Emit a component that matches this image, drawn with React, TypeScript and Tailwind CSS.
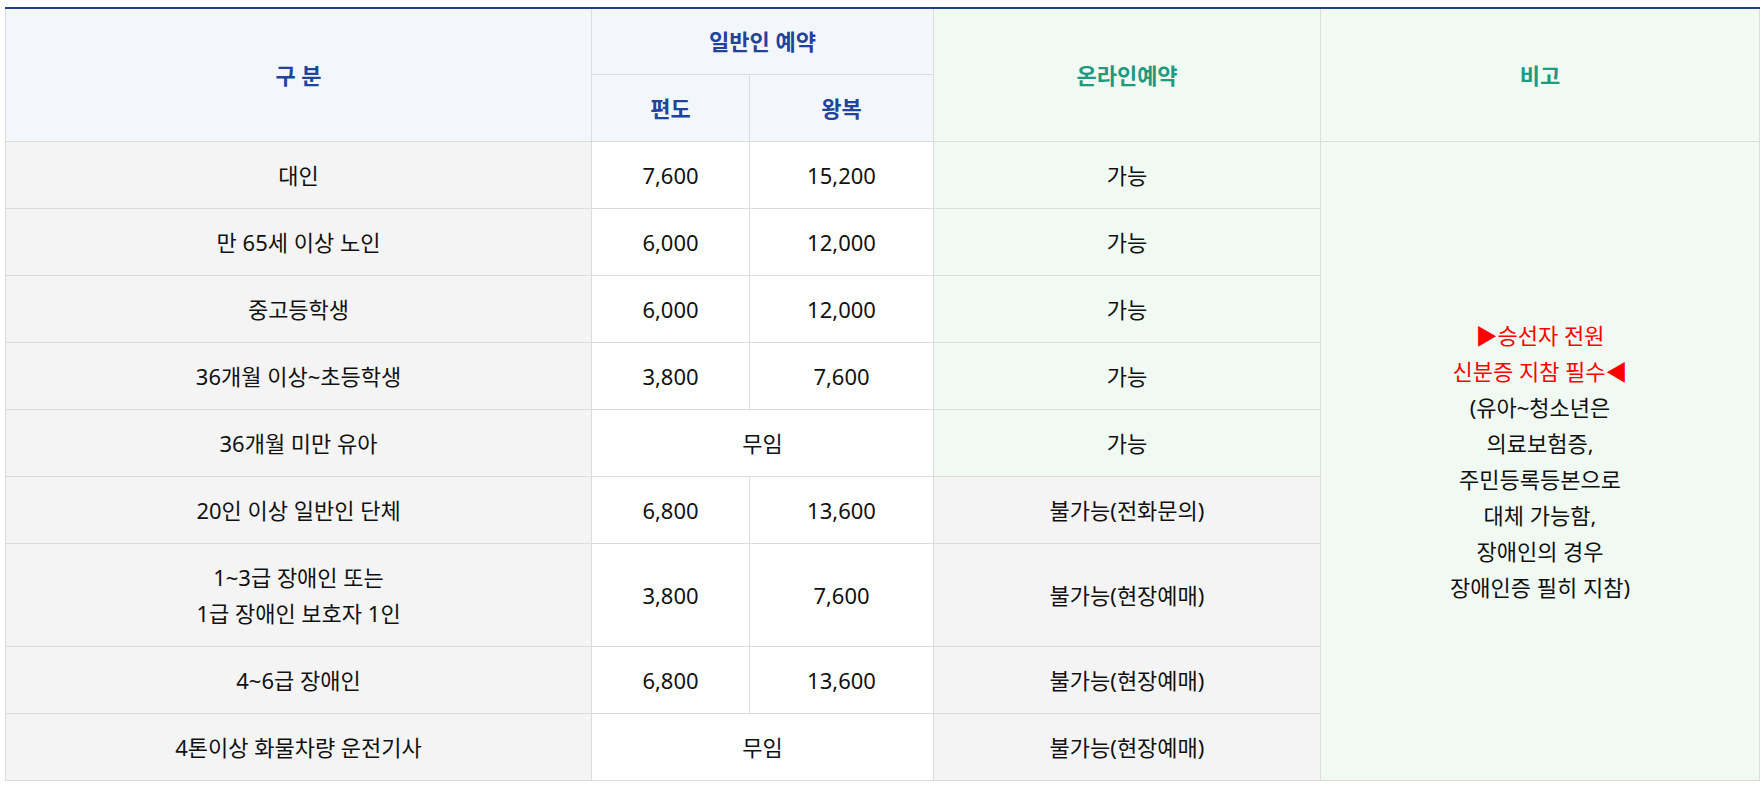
const font = "font-['Noto_Sans','Noto_Sans_CJK_KR',sans-serif]";

type Row = {
  label: string[];
  oneWay?: string;
  round?: string;
  free?: boolean;
  online: string;
  ok: boolean;
  tall?: boolean;
};

const rows: Row[] = [
  { label: ["대인"], oneWay: "7,600", round: "15,200", online: "가능", ok: true },
  { label: ["만 65세 이상 노인"], oneWay: "6,000", round: "12,000", online: "가능", ok: true },
  { label: ["중고등학생"], oneWay: "6,000", round: "12,000", online: "가능", ok: true },
  { label: ["36개월 이상~초등학생"], oneWay: "3,800", round: "7,600", online: "가능", ok: true },
  { label: ["36개월 미만 유아"], free: true, online: "가능", ok: true },
  { label: ["20인 이상 일반인 단체"], oneWay: "6,800", round: "13,600", online: "불가능(전화문의)", ok: false },
  {
    label: ["1~3급 장애인 또는", "1급 장애인 보호자 1인"],
    oneWay: "3,800",
    round: "7,600",
    online: "불가능(현장예매)",
    ok: false,
    tall: true,
  },
  { label: ["4~6급 장애인"], oneWay: "6,800", round: "13,600", online: "불가능(현장예매)", ok: false },
  { label: ["4톤이상 화물차량 운전기사"], free: true, online: "불가능(현장예매)", ok: false },
];

const notes = [
  "(유아~청소년은",
  "의료보험증,",
  "주민등록등본으로",
  "대체 가능함,",
  "장애인의 경우",
  "장애인증 필히 지참)",
];

export default function App() {
  const cell = "border border-[#dcdcdc] text-center align-middle";
  const blueHead = `${cell} bg-[#f3f6fb] text-[#22439a] font-semibold`;
  const greenHead = `${cell} bg-[#f0f9f2] text-[#1d9a80] font-semibold`;

  return (
    <div className={`min-h-screen bg-white px-[5px] pt-[7px] ${font} text-[22px] leading-[36px] text-[#111]`}>
      <table className="w-[1754px] table-fixed border-collapse border-t-2 border-t-[#233f85]">
        <colgroup>
          <col className="w-[586px]" />
          <col className="w-[158px]" />
          <col className="w-[184px]" />
          <col className="w-[387px]" />
          <col className="w-[439px]" />
        </colgroup>
        <thead>
          <tr className="h-[66px]">
            <th rowSpan={2} className={`${blueHead} border-t-0`}>
              구 분
            </th>
            <th colSpan={2} className={`${blueHead} border-t-0`}>
              일반인 예약
            </th>
            <th rowSpan={2} className={`${greenHead} border-t-0`}>
              온라인예약
            </th>
            <th rowSpan={2} className={`${greenHead} border-t-0`}>
              비고
            </th>
          </tr>
          <tr className="h-[67px]">
            <th className={blueHead}>편도</th>
            <th className={blueHead}>왕복</th>
          </tr>
        </thead>
        <tbody>
          {rows.map((r, i) => (
            <tr key={i} className={r.tall ? "h-[103px]" : "h-[67px]"}>
              <td className={`${cell} bg-[#f4f4f4]`}>
                {r.label.map((l) => (
                  <div key={l}>{l}</div>
                ))}
              </td>
              {r.free ? (
                <td colSpan={2} className={`${cell} bg-white`}>
                  무임
                </td>
              ) : (
                <>
                  <td className={`${cell} bg-white`}>{r.oneWay}</td>
                  <td className={`${cell} bg-white`}>{r.round}</td>
                </>
              )}
              <td className={`${cell} ${r.ok ? "bg-[#f0f9f2]" : "bg-[#f4f4f4]"}`}>{r.online}</td>
              {i === 0 && (
                <td rowSpan={rows.length} className={`${cell} bg-[#f0f9f2]`}>
                  <div className="text-[#ff0000]">▶승선자 전원</div>
                  <div className="text-[#ff0000]">신분증 지참 필수◀</div>
                  {notes.map((n) => (
                    <div key={n}>{n}</div>
                  ))}
                </td>
              )}
            </tr>
          ))}
        </tbody>
      </table>
    </div>
  );
}
